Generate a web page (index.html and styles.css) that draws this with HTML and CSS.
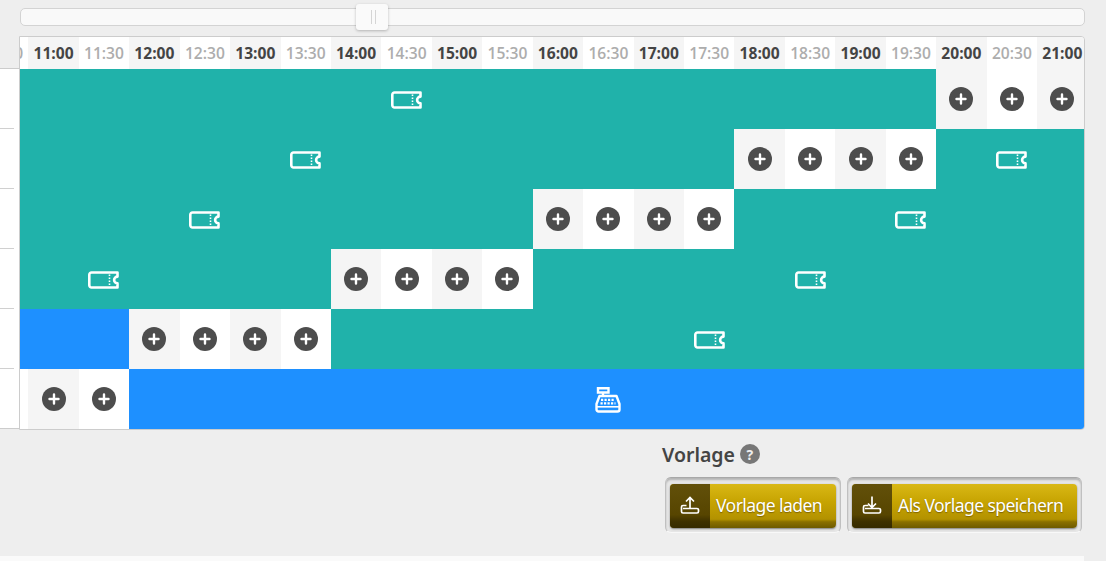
FILE: index.html
```html
<!DOCTYPE html>
<html lang="de">
<head>
<meta charset="utf-8">
<title>Vorlage</title>
<link rel="stylesheet" href="styles.css">
</head>
<body>
<svg class="defs" width="0" height="0" aria-hidden="true">
  <symbol id="ticket" viewBox="0 0 31 18">
    <path d="M3.500 1.500H29.500V5.600a3.400 3.400 0 0 0 0 6.800v4.100H3.500a2.200 2.200 0 0 1-2.200-2.200V3.700a2.200 2.200 0 0 1 2.200-2.200Z" fill="none" stroke="currentColor" stroke-width="2.600" stroke-linejoin="round"/>
    <path d="M21.500 3.500V15" fill="none" stroke="currentColor" stroke-width="1.600" stroke-dasharray="1.400 1.600"/>
  </symbol>
  <symbol id="plus" viewBox="0 0 24 24">
    <circle cx="12" cy="12" r="12" fill="#4d4d4d"/>
    <path d="M12 7.500v9M7.500 12h9" stroke="#fff" stroke-width="2.400" stroke-linecap="round"/>
  </symbol>
  <symbol id="register" viewBox="0 0 26 26">
    <path d="M3 1.200h10.500v4.300H3Z M8 5.500v3" fill="none" stroke="currentColor" stroke-width="2.400"/>
    <path d="M4.500 9H21.500L24.500 17V22.500a2 2 0 0 1-2 2H3.500a2 2 0 0 1-2-2V17Z" fill="none" stroke="currentColor" stroke-width="2.400" stroke-linejoin="round"/>
    <path d="M6 12.800h14M5.500 16.300h15" stroke="currentColor" stroke-width="2.200" stroke-dasharray="2.200 1.300"/>
    <path d="M2 19.800h22" stroke="currentColor" stroke-width="1.600"/>
  </symbol>
</svg>

<div class="slider"><span class="handle"></span></div>

<div class="scheduler">
  <div class="side">
    <div class="side-head"></div>
    <div class="side-row"></div>
    <div class="side-row"></div>
    <div class="side-row"></div>
    <div class="side-row"></div>
    <div class="side-row"></div>
    <div class="side-row last"></div>
  </div>
  <div class="timeline">
    <div class="grid header">
      <div class="time half span-2"></div><div class="time half">10:30</div>
      <div class="time full">11:00</div><div class="time half">11:30</div>
      <div class="time full">12:00</div><div class="time half">12:30</div>
      <div class="time full">13:00</div><div class="time half">13:30</div>
      <div class="time full">14:00</div><div class="time half">14:30</div>
      <div class="time full">15:00</div><div class="time half">15:30</div>
      <div class="time full">16:00</div><div class="time half">16:30</div>
      <div class="time full">17:00</div><div class="time half">17:30</div>
      <div class="time full">18:00</div><div class="time half">18:30</div>
      <div class="time full">19:00</div><div class="time half">19:30</div>
      <div class="time full">20:00</div><div class="time half">20:30</div>
      <div class="time full">21:00</div>
    </div>

    <div class="grid row">
      <div class="bar teal span-21"><svg class="ticket"><use href="#ticket"/></svg></div>
      <div class="slot full"><svg class="plus"><use href="#plus"/></svg></div>
      <div class="slot half"><svg class="plus"><use href="#plus"/></svg></div>
      <div class="slot full"><svg class="plus"><use href="#plus"/></svg></div>
    </div>

    <div class="grid row">
      <div class="bar teal span-17"><svg class="ticket"><use href="#ticket"/></svg></div>
      <div class="slot full"><svg class="plus"><use href="#plus"/></svg></div>
      <div class="slot half"><svg class="plus"><use href="#plus"/></svg></div>
      <div class="slot full"><svg class="plus"><use href="#plus"/></svg></div>
      <div class="slot half"><svg class="plus"><use href="#plus"/></svg></div>
      <div class="bar teal span-3"><svg class="ticket"><use href="#ticket"/></svg></div>
    </div>

    <div class="grid row">
      <div class="bar teal span-13"><svg class="ticket"><use href="#ticket"/></svg></div>
      <div class="slot full"><svg class="plus"><use href="#plus"/></svg></div>
      <div class="slot half"><svg class="plus"><use href="#plus"/></svg></div>
      <div class="slot full"><svg class="plus"><use href="#plus"/></svg></div>
      <div class="slot half"><svg class="plus"><use href="#plus"/></svg></div>
      <div class="bar teal span-7"><svg class="ticket"><use href="#ticket"/></svg></div>
    </div>

    <div class="grid row">
      <div class="bar teal span-9"><svg class="ticket"><use href="#ticket"/></svg></div>
      <div class="slot full"><svg class="plus"><use href="#plus"/></svg></div>
      <div class="slot half"><svg class="plus"><use href="#plus"/></svg></div>
      <div class="slot full"><svg class="plus"><use href="#plus"/></svg></div>
      <div class="slot half"><svg class="plus"><use href="#plus"/></svg></div>
      <div class="bar teal span-11"><svg class="ticket"><use href="#ticket"/></svg></div>
    </div>

    <div class="grid row">
      <div class="bar blue span-5"></div>
      <div class="slot full"><svg class="plus"><use href="#plus"/></svg></div>
      <div class="slot half"><svg class="plus"><use href="#plus"/></svg></div>
      <div class="slot full"><svg class="plus"><use href="#plus"/></svg></div>
      <div class="slot half"><svg class="plus"><use href="#plus"/></svg></div>
      <div class="bar teal span-15"><svg class="ticket"><use href="#ticket"/></svg></div>
    </div>

    <div class="grid row">
      <div class="slot half span-3"></div>
      <div class="slot full"><svg class="plus"><use href="#plus"/></svg></div>
      <div class="slot half"><svg class="plus"><use href="#plus"/></svg></div>
      <div class="bar blue span-19"><svg class="register"><use href="#register"/></svg></div>
    </div>
  </div>
</div>

<section class="template">
  <h2 class="template-title">Vorlage <span class="help">?</span></h2>
  <div class="template-actions">
    <div class="frame frame-load">
      <button class="btn" type="button">
        <span class="btn-icon">
          <svg class="btn-svg" viewBox="0 0 20 20"><path d="M10 13V2.500M6 6.500l4-4 4 4" fill="none" stroke="currentColor" stroke-width="1.700"/><path d="M6.500 10.500H3a1.500 1.500 0 0 0-1.500 1.500v4.500a1.500 1.500 0 0 0 1.500 1.500h14a1.500 1.500 0 0 0 1.500-1.500v-1.500a1.500 1.500 0 0 0-1.500-1.500H3" fill="none" stroke="currentColor" stroke-width="1.700"/></svg>
        </span>
        <span class="btn-label">Vorlage laden</span>
      </button>
    </div>
    <div class="frame frame-save">
      <button class="btn" type="button">
        <span class="btn-icon">
          <svg class="btn-svg" viewBox="0 0 20 20"><path d="M10 1.500V12M6 8.500l4 4 4-4" fill="none" stroke="currentColor" stroke-width="1.700"/><path d="M6.500 10.500H3a1.500 1.500 0 0 0-1.500 1.500v4.500a1.500 1.500 0 0 0 1.500 1.500h14a1.500 1.500 0 0 0 1.500-1.500v-1.500a1.500 1.500 0 0 0-1.500-1.500H3" fill="none" stroke="currentColor" stroke-width="1.700"/></svg>
        </span>
        <span class="btn-label">Als Vorlage speichern</span>
      </button>
    </div>
  </div>
</section>

<div class="next-panel"></div>
</body>
</html>
```

FILE: styles.css
```css
* { box-sizing: border-box; }

html, body {
  margin: 0;
  height: 561px;
  overflow: hidden;
}

body {
  background: #eeeeee;
  font-family: "Open Sans", "Noto Sans", sans-serif;
  color: #444;
  padding-top: 8px;
}

.defs { position: absolute; }

/* slider */
.slider {
  position: relative;
  margin-left: 20px;
  width: 1065px;
  height: 18px;
  background: #f9f9f9;
  border: 1px solid #d3d3d3;
  border-radius: 5px;
}

.handle {
  position: absolute;
  left: 335px;
  top: -5px;
  width: 32px;
  height: 26px;
  background: #fafafa;
  border-radius: 3px;
  box-shadow: 0 1px 3px rgba(0, 0, 0, 0.25);
}

.handle::before {
  content: "";
  position: absolute;
  left: 15px;
  top: 6px;
  width: 3px;
  height: 14px;
  border-left: 1px solid #d5d5d5;
  border-right: 1px solid #d5d5d5;
}

/* scheduler */
.scheduler {
  display: flex;
  margin-top: 10px;
  width: 1085px;
}

.side {
  width: 19px;
  flex: none;
}

.side-head {
  height: 33px;
  border-bottom: 1px solid #ccc;
}

.side-row {
  height: 60px;
  background: #fff;
  position: relative;
}

.side-row::after {
  content: "";
  position: absolute;
  left: 0;
  bottom: 0;
  width: 14px;
  height: 1px;
  background: #d0d0d0;
}

.side-row.last::after { width: 19px; background: #ccc; }

.timeline {
  width: 1066px;
  border: 1px solid #ccc;
  border-radius: 0 4px 4px 0;
  overflow: hidden;
  background: #fff;
}

.grid {
  display: grid;
  grid-template-columns: repeat(24, 50.45px);
  margin-left: -143px;
  width: 1211px;
}

.header { height: 32px; }
.row { height: 60px; }

.time {
  display: flex;
  align-items: center;
  justify-content: center;
  padding-bottom: 1px;
  font-size: 15.6px;
  font-weight: 700;
  white-space: nowrap;
}

.time.full { background: #f5f5f5; color: #444; }
.time.half { background: #fff; color: #adadad; font-weight: 600; }

.slot {
  display: flex;
  align-items: center;
  justify-content: center;
}

.slot.full { background: #f5f5f5; }
.slot.half { background: #fff; }

.plus { width: 24px; height: 24px; }

.bar {
  display: flex;
  align-items: center;
  justify-content: center;
  padding-top: 2px;
  color: #fff;
}

.teal { background: #20b2aa; }
.blue { background: #1e90ff; }

.span-2 { grid-column: span 2; }
.span-3 { grid-column: span 3; }
.span-5 { grid-column: span 5; }
.span-7 { grid-column: span 7; }
.span-9 { grid-column: span 9; }
.span-11 { grid-column: span 11; }
.span-13 { grid-column: span 13; }
.span-15 { grid-column: span 15; }
.span-17 { grid-column: span 17; }
.span-19 { grid-column: span 19; }
.span-21 { grid-column: span 21; }

.ticket { width: 31px; height: 18px; }
.register { width: 26px; height: 26px; }

/* template */
.template {
  margin-left: 662px;
  margin-top: 11px;
  width: 430px;
}

.template-title {
  display: flex;
  align-items: center;
  gap: 5px;
  margin: 0;
  height: 26px;
  font-family: "Noto Sans", sans-serif;
  font-size: 19.5px;
  font-weight: 600;
  color: #444;
}

.help {
  display: inline-flex;
  align-items: center;
  justify-content: center;
  width: 20px;
  height: 20px;
  border-radius: 50%;
  background: #777;
  color: #eee;
  font-size: 14px;
  font-weight: 700;
}

.template-actions {
  display: flex;
  gap: 6px;
  margin-top: 10px;
  margin-left: 3px;
}

.frame {
  height: 56px;
  padding: 6px 4px 4px;
  border: 1px solid #a8a8a8;
  border-bottom-color: #f8f8f8;
  border-left-color: #c0c0c0;
  border-right-color: #c0c0c0;
  border-radius: 6px;
  background: #e6e6e6;
  box-shadow: inset 0 2px 2px rgba(0, 0, 0, 0.22);
}

.frame-load { width: 176px; }
.frame-save { width: 235px; }

.btn {
  display: flex;
  width: 100%;
  height: 44px;
  padding: 0;
  border: 0;
  border-radius: 4px;
  overflow: hidden;
  background: linear-gradient(#d9b815 0%, #c7a402 40%, #b39200 80%, #8a7000 86%, #6e5a00 100%);
  box-shadow: 0 1px 2px rgba(0, 0, 0, 0.45);
  color: #fff;
  font-family: "Noto Sans", sans-serif;
  font-size: 17.5px;
}

.btn-icon {
  flex: none;
  display: flex;
  align-items: center;
  justify-content: center;
  width: 40px;
  height: 100%;
  padding-bottom: 2px;
  background: linear-gradient(#62500a 0%, #574500 70%, #3e3100 85%, #352a00 100%);
}

.btn-svg { width: 20px; height: 20px; color: #fff; }

.btn-label {
  flex: 1;
  display: flex;
  align-items: center;
  height: 100%;
  padding-left: 6px;
  padding-bottom: 3px;
  letter-spacing: -0.55px;
  white-space: nowrap;
  text-shadow: 0 1px 1px rgba(70, 50, 0, 0.5);
}

.next-panel {
  margin-top: 23px;
  width: 1084px;
  height: 20px;
  background: #fafafa;
}
```
